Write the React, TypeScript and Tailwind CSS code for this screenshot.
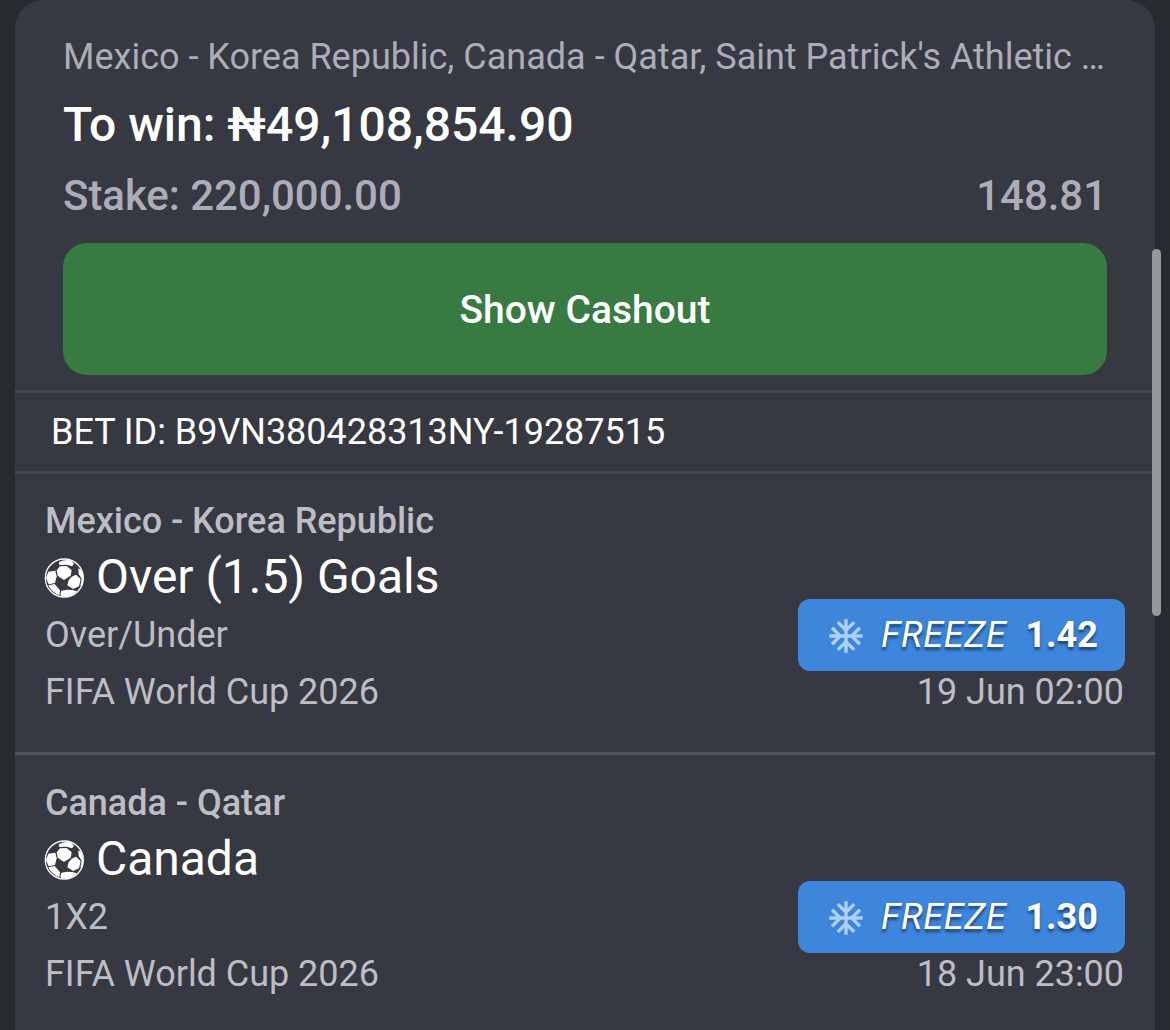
import React from 'react';
import { MdAcUnit } from 'react-icons/md';

interface Selection {
  match: string;
  pick: string;
  market: string;
  league: string;
  odds: string;
  date: string;
}

const selections: Selection[] = [
  {
    match: 'Mexico - Korea Republic',
    pick: 'Over (1.5) Goals',
    market: 'Over/Under',
    league: 'FIFA World Cup 2026',
    odds: '1.42',
    date: '19 Jun 02:00',
  },
  {
    match: 'Canada - Qatar',
    pick: 'Canada',
    market: '1X2',
    league: 'FIFA World Cup 2026',
    odds: '1.30',
    date: '18 Jun 23:00',
  },
];

const SoccerBall = () => (
  <svg viewBox="-1 0 120 120" className="size-10 shrink-0" fill="#fff">
    <circle cx="60" cy="60" r="57" fill="none" stroke="#fff" strokeWidth="4" />
    <path d="M47 25 L67 24 L82 37 L79 53 L59 66 L40 53 L37 37 Z" />
    <path d="M43 13 Q60 3 79 7 L89 17 L83 25 L67 20 L45 21 Z" />
    <path d="M12 41 L33 38 L37 55 L32 75 L13 79 L5 60 Z" />
    <path d="M82 56 L95 50 L109 63 L104 85 L86 93 L69 82 L73 67 Z" />
    <path d="M12 82 L31 78 L47 97 L45 112 Q22 103 12 82 Z" />
    <path d="M51 98 L67 95 L84 96 L98 100 Q78 119 51 115 L48 109 Z" />
    <path d="M102 31 L111 36 Q121 58 113 80 L108 83 L112 62 L103 48 Z" />
  </svg>
);

const FreezeBadge = ({ odds }: { odds: string }) => (
  <div className="flex h-[72px] w-[327px] items-center rounded-xl bg-[#3d86dc] pl-7 text-4xl text-white">
    <MdAcUnit className="mt-px size-10 shrink-0 text-[#acd0ff]" />
    <span className="ml-[15px] tracking-[0.7px] italic [text-shadow:0_3px_3px_rgba(0,0,0,0.5)]">FREEZE</span>
    <span className="ml-[19px] font-bold [text-shadow:0_3px_3px_rgba(0,0,0,0.5)]">{odds}</span>
  </div>
);

const SelectionRow = ({ match, pick, market, league, odds, date }: Selection) => (
  <div className="mb-px flex h-[281px] justify-between border-b-3 border-[#51535f] px-[30px] text-4xl tracking-[-0.03px] text-[#bdbec4]">
    <div className="pt-[19px]">
      <div className="h-[57px] leading-[57px] font-medium">{match}</div>
      <div className="-ml-px flex h-[55px] items-center gap-3 text-5xl text-white">
        <SoccerBall />
        <span className="pb-0.5">{pick}</span>
      </div>
      <div className="h-[57px] leading-[60px]">{market}</div>
      <div className="h-[57px] leading-[60px]">{league}</div>
    </div>
    <div className="flex flex-col items-end pt-[125px]">
      <FreezeBadge odds={odds} />
      <div className="pr-px leading-[42px]">{date}</div>
    </div>
  </div>
);

export default function App() {
  return (
    <div className="relative h-[1030px] w-[1170px] overflow-hidden bg-[#272a2f] px-[15px] font-[Roboto,sans-serif]">
      <div className="h-[1040px] rounded-t-[28px] bg-[#363842]">
        <div className="h-[390px] px-12 pt-[30px]">
          <div className="h-[54px] text-4xl leading-[54px] whitespace-nowrap text-[#adadb7]">
            Mexico - Korea Republic, Canada - Qatar, Saint Patrick's Athletic …
          </div>
          <div className="h-[82px] text-5xl leading-[82px] font-medium text-white">
            To win: ₦49,108,854.90
          </div>
          <div className="flex h-[60px] justify-between text-[42px] leading-[60px] font-medium tracking-[-0.05px] text-[#adadb7]">
            <span>Stake: 220,000.00</span>
            <span>148.81</span>
          </div>
          <button className="mt-[17px] h-[132px] w-full rounded-3xl bg-[#377b43] pt-0.5 text-[39px] font-medium text-white">
            Show Cashout
          </button>
        </div>
        <div className="flex h-[84px] items-center border-y-3 border-[#454853] px-9 text-4xl tracking-[-0.03px] text-white">
          BET ID: B9VN380428313NY-19287515
        </div>
        {selections.map((selection) => (
          <SelectionRow key={selection.match} {...selection} />
        ))}
      </div>
      {/* scrollbar thumb */}
      <div className="absolute top-[249px] right-[9px] h-[367px] w-[9px] rounded-full bg-[#97989b]" />
    </div>
  );
}
